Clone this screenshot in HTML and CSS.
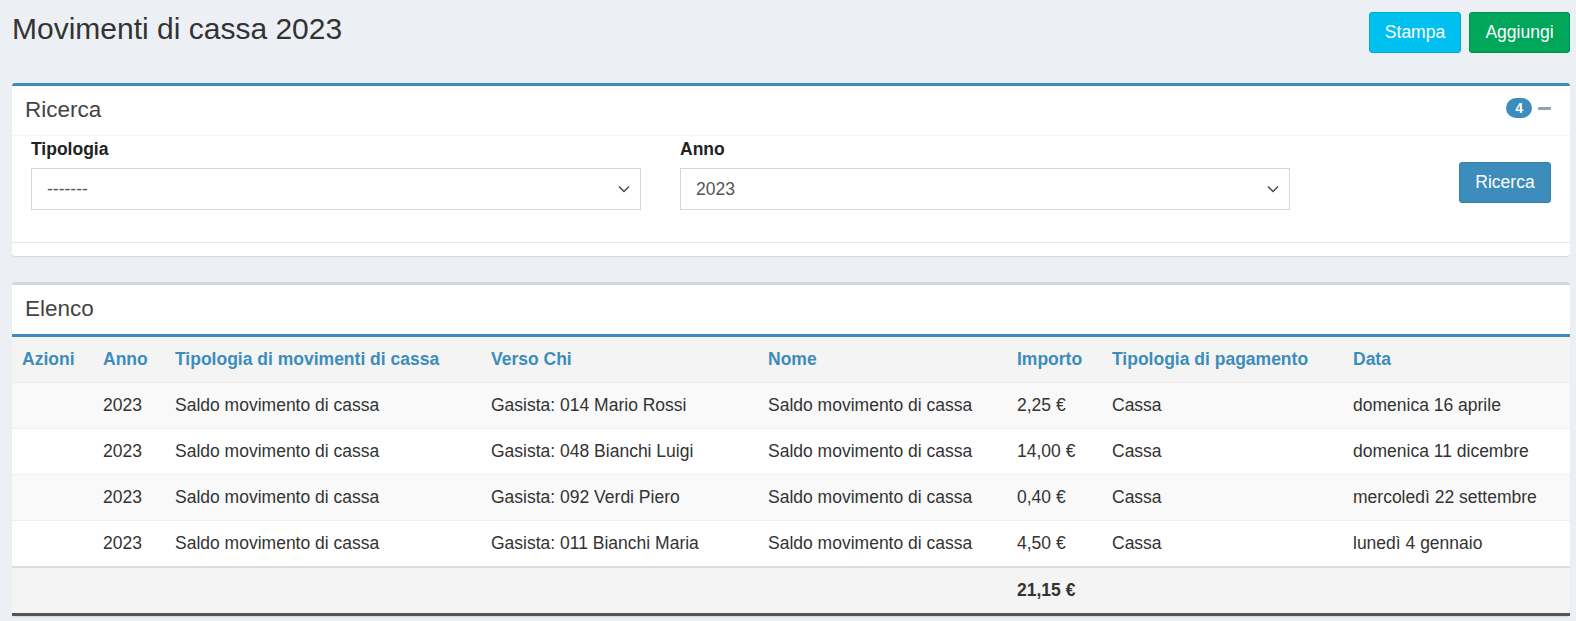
FILE: index.html
```html
<!DOCTYPE html>
<html lang="it">
<head>
<meta charset="utf-8">
<title>Movimenti di cassa 2023</title>
<link rel="stylesheet" href="styles.css">
</head>
<body>
<div class="content">
  <div class="page-header">
    <h1>Movimenti di cassa 2023</h1>
    <div class="actions">
      <button class="btn btn-info">Stampa</button>
      <button class="btn btn-success">Aggiungi</button>
    </div>
  </div>

  <div class="box box-primary">
    <div class="box-header with-border">
      <h3 class="box-title">Ricerca</h3>
      <div class="box-tools">
        <span class="badge">4</span>
        <span class="minus"></span>
      </div>
    </div>
    <div class="box-body search-body">
      <div class="field">
        <label>Tipologia</label>
        <div class="form-control"><span>-------</span>
          <svg class="chev" width="12" height="8" viewBox="0 0 12 8"><path d="M1 1.5 L6 6.5 L11 1.5" fill="none" stroke="#444" stroke-width="1.4"/></svg>
        </div>
      </div>
      <div class="field">
        <label>Anno</label>
        <div class="form-control"><span>2023</span>
          <svg class="chev" width="12" height="8" viewBox="0 0 12 8"><path d="M1 1.5 L6 6.5 L11 1.5" fill="none" stroke="#444" stroke-width="1.4"/></svg>
        </div>
      </div>
      <div class="spacer"></div>
      <button class="btn btn-primary search-btn">Ricerca</button>
    </div>
    <div class="box-footer"></div>
  </div>

  <div class="box box-default">
    <div class="box-header">
      <h3 class="box-title">Elenco</h3>
    </div>
    <table class="table">
      <colgroup>
        <col class="c1"><col class="c2"><col class="c3"><col class="c4"><col class="c5"><col class="c6"><col class="c7"><col class="c8">
      </colgroup>
      <thead>
        <tr>
          <th>Azioni</th><th>Anno</th><th>Tipologia di movimenti di cassa</th><th>Verso Chi</th><th>Nome</th><th>Importo</th><th>Tipologia di pagamento</th><th>Data</th>
        </tr>
      </thead>
      <tbody>
        <tr><td></td><td>2023</td><td>Saldo movimento di cassa</td><td>Gasista: 014 Mario Rossi</td><td>Saldo movimento di cassa</td><td>2,25 €</td><td>Cassa</td><td>domenica 16 aprile</td></tr>
        <tr><td></td><td>2023</td><td>Saldo movimento di cassa</td><td>Gasista: 048 Bianchi Luigi</td><td>Saldo movimento di cassa</td><td>14,00 €</td><td>Cassa</td><td>domenica 11 dicembre</td></tr>
        <tr><td></td><td>2023</td><td>Saldo movimento di cassa</td><td>Gasista: 092 Verdi Piero</td><td>Saldo movimento di cassa</td><td>0,40 €</td><td>Cassa</td><td>mercoledì 22 settembre</td></tr>
        <tr><td></td><td>2023</td><td>Saldo movimento di cassa</td><td>Gasista: 011 Bianchi Maria</td><td>Saldo movimento di cassa</td><td>4,50 €</td><td>Cassa</td><td>lunedì 4 gennaio</td></tr>
      </tbody>
      <tfoot>
        <tr><td></td><td></td><td></td><td></td><td></td><td class="total">21,15 €</td><td></td><td></td></tr>
      </tfoot>
    </table>
  </div>
</div>
</body>
</html>
```
FILE: styles.css
```css
html, body {
  margin: 0;
  padding: 0;
}
body {
  background: #ecf0f5;
  font-family: "Liberation Sans", Arial, sans-serif;
  font-size: 17.5px;
  color: #333;
}
.content {
  padding: 12px 6px 0 12px;
}
.page-header {
  display: flex;
  justify-content: space-between;
  align-items: flex-start;
  margin-bottom: 30px;
}
.page-header h1 {
  margin: 0;
  font-size: 30px;
  font-weight: 400;
  line-height: 33px;
  color: #333;
}
.actions {
  display: flex;
  gap: 8px;
}
.btn {
  font-family: "Liberation Sans", Arial, sans-serif;
  font-size: 17.5px;
  line-height: 25px;
  padding: 7px 14px;
  border: 1px solid transparent;
  border-radius: 3px;
  color: #fff;
  cursor: pointer;
}
.btn-info {
  background: #00c0ef;
  border-color: #00acd6;
  width: 92px;
}
.btn-success {
  background: #00a65a;
  border-color: #008d4c;
  width: 101px;
}
.btn-primary {
  background: #3c8dbc;
  border-color: #367fa9;
}
.box {
  background: #fff;
  border-top: 3px solid #d2d6de;
  border-radius: 3px;
  box-shadow: 0 1px 1px rgba(0,0,0,0.1);
  margin-bottom: 26px;
}
.box-primary {
  border-top-color: #3c8dbc;
}
.box-header {
  display: flex;
  align-items: center;
  justify-content: space-between;
  padding: 13px 13px 13px 13px;
}
.box-header.with-border {
  border-bottom: 1px solid #f4f4f4;
  height: 23px;
}
.box-title {
  margin: 0;
  font-size: 22.5px;
  font-weight: 400;
  line-height: 22.5px;
  color: #444;
}
.box-tools {
  display: flex;
  align-items: center;
  gap: 6px;
  margin-right: 6px;
  margin-top: -6px;
}
.badge {
  background: #3c8dbc;
  color: #fff;
  font-size: 14px;
  font-weight: 700;
  line-height: 1;
  padding: 3px 9px;
  border-radius: 10px;
}
.minus {
  display: block;
  width: 13px;
  height: 3px;
  background: #97a0b3;
  border-radius: 1px;
  margin-top: 2px;
}
.search-body {
  display: flex;
  align-items: flex-start;
  padding: 1px 19px 32px 19px;
}
.field {
  width: 610px;
  margin-right: 39px;
}
.field label {
  display: block;
  font-weight: 700;
  font-size: 17.5px;
  line-height: 25px;
  color: #222;
  margin-bottom: 6px;
}
.form-control {
  box-sizing: border-box;
  height: 42px;
  border: 1px solid #d2d6de;
  display: flex;
  align-items: center;
  justify-content: space-between;
  padding: 0 10px 0 15px;
  font-size: 17.5px;
  color: #555;
}
.chev {
  display: block;
}
.spacer {
  flex: 1;
}
.search-btn {
  margin-top: 25px;
  width: 92px;
  padding: 7px 0;
}
.box-footer {
  border-top: 1px solid #e6e6e6;
  height: 13px;
}
.table {
  width: 100%;
  border-collapse: collapse;
  border-top: 3px solid #3c8dbc;
  table-layout: fixed;
}
.c1 { width: 81px; }
.c2 { width: 72px; }
.c3 { width: 316px; }
.c4 { width: 277px; }
.c5 { width: 249px; }
.c6 { width: 95px; }
.c7 { width: 241px; }
.c8 { width: auto; }
.table th, .table td {
  text-align: left;
  padding: 10px 10px;
  line-height: 25px;
  white-space: nowrap;
}
.table th {
  color: #3c8dbc;
  font-weight: 700;
}
.table thead tr {
  background: #f4f4f4;
}
.table tbody td {
  border-top: 1px solid #f0f0f0;
}
.table tbody tr:nth-child(odd) {
  background: #f9f9f9;
}
.table tbody tr:nth-child(even) {
  background: #fff;
}
.table tfoot tr {
  background: #f4f4f4;
  border-top: 2px solid #ddd;
  border-bottom: 3px solid #555;
}
.table tfoot td {
  height: 25px;
}
.total {
  font-weight: 700;
}
```
